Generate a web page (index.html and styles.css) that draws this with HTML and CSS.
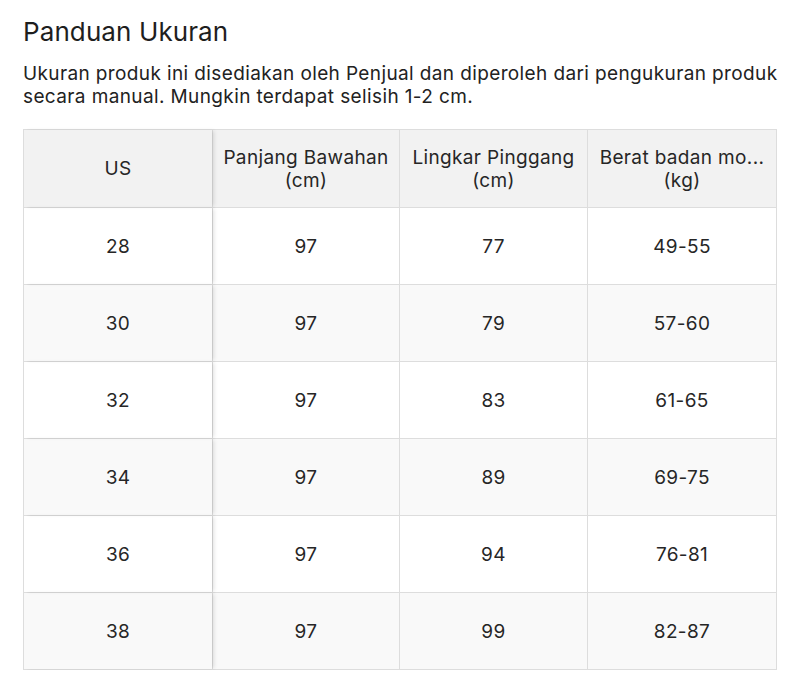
FILE: index.html
```html
<!DOCTYPE html>
<html lang="id">
<head>
<meta charset="utf-8">
<title>Panduan Ukuran</title>
<link rel="stylesheet" href="styles.css">
</head>
<body>
<div class="page">
  <h1 class="title">Panduan Ukuran</h1>
  <p class="desc">Ukuran produk ini disediakan oleh Penjual dan diperoleh dari pengukuran produk secara manual. Mungkin terdapat selisih 1-2 cm.</p>
  <div class="table">
    <div class="row head">
      <div class="cell first">US</div>
      <div class="cell">Panjang Bawahan<br>(cm)</div>
      <div class="cell">Lingkar Pinggang<br>(cm)</div>
      <div class="cell">Berat badan mo...<br>(kg)</div>
    </div>
    <div class="row"><div class="cell first">28</div><div class="cell">97</div><div class="cell">77</div><div class="cell">49-55</div></div>
    <div class="row alt"><div class="cell first">30</div><div class="cell">97</div><div class="cell">79</div><div class="cell">57-60</div></div>
    <div class="row"><div class="cell first">32</div><div class="cell">97</div><div class="cell">83</div><div class="cell">61-65</div></div>
    <div class="row alt"><div class="cell first">34</div><div class="cell">97</div><div class="cell">89</div><div class="cell">69-75</div></div>
    <div class="row"><div class="cell first">36</div><div class="cell">97</div><div class="cell">94</div><div class="cell">76-81</div></div>
    <div class="row alt last"><div class="cell first">38</div><div class="cell">97</div><div class="cell">99</div><div class="cell">82-87</div></div>
  </div>
</div>
</body>
</html>
```
FILE: styles.css
```css
html, body {
  margin: 0;
  padding: 0;
  background: #ffffff;
}
body {
  font-family: Inter, "Noto Sans", "Liberation Sans", sans-serif;
  color: #222222;
}
.page {
  padding: 16px 10px 0 23px;
}
.title {
  margin: 0;
  font-size: 26px;
  font-weight: 400;
  line-height: 32px;
  letter-spacing: 0.1px;
  color: #1e1e1e;
}
.desc {
  margin: 14px 0 0 0;
  max-width: 760px;
  font-size: 19px;
  line-height: 23px;
  letter-spacing: 0.38px;
  color: #222222;
}
.table {
  margin-top: 21px;
  width: 752px;
  border: 1px solid #dddddd;
  border-bottom: none;
}
.row {
  display: grid;
  grid-template-columns: 188px 187px 188px 1fr;
  height: 76px;
  border-bottom: 1px solid #dddddd;
  background: #ffffff;
}
.row.head {
  height: 77px;
  background: #f2f2f2;
}
.row.alt {
  background: #f9f9f9;
}
.cell {
  display: flex;
  align-items: center;
  justify-content: center;
  text-align: center;
  font-size: 19px;
  line-height: 23px;
  letter-spacing: 0.35px;
  color: #262626;
  border-left: 1px solid #dddddd;
}
.cell.first {
  border-left: none;
  position: relative;
  z-index: 1;
  box-shadow: 3px 0 4px -1px rgba(0, 0, 0, 0.12);
}
```
